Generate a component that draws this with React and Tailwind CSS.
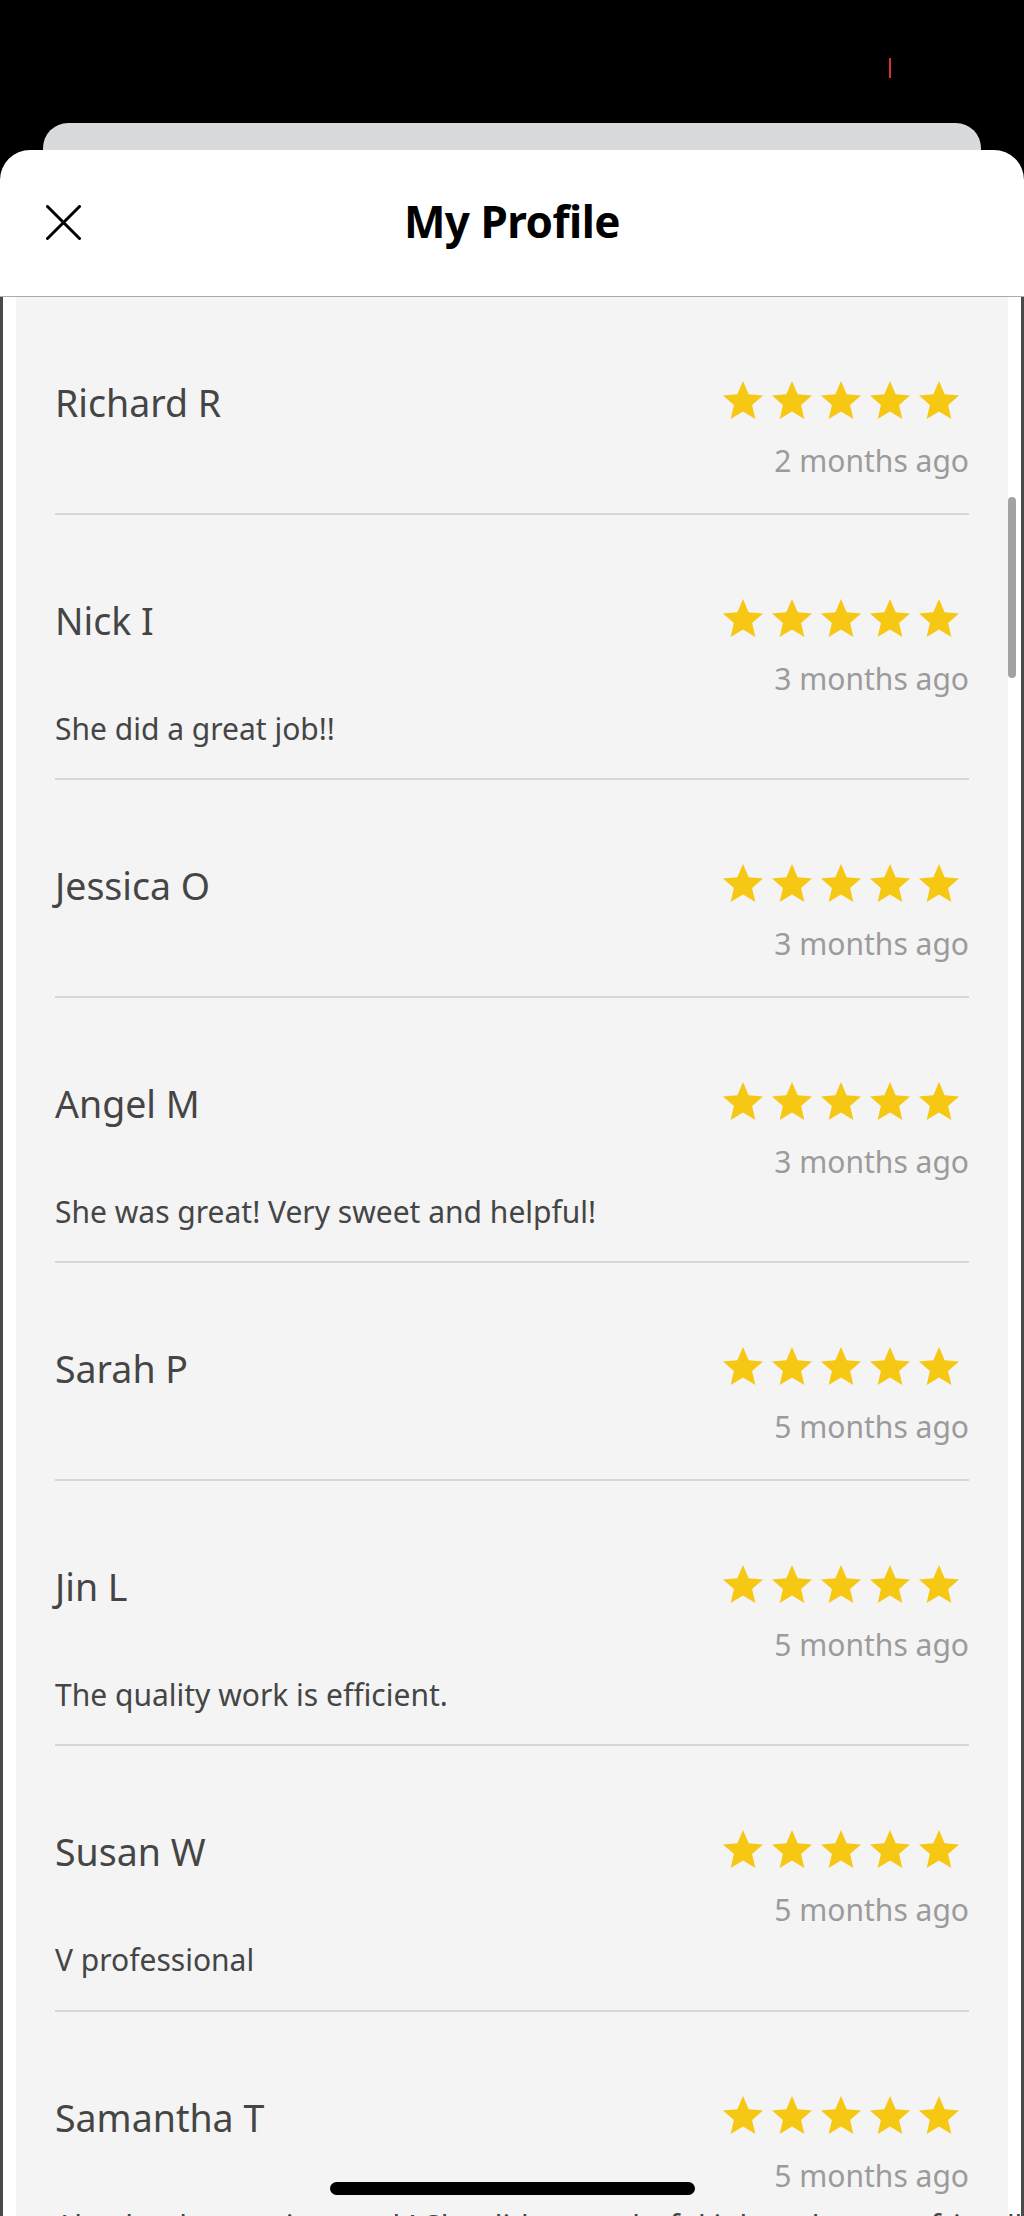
import React from "react";

const reviews = [
  { name: "Richard R", when: "2 months ago" },
  { name: "Nick I", when: "3 months ago", text: "She did a great job!!" },
  { name: "Jessica O", when: "3 months ago" },
  { name: "Angel M", when: "3 months ago", text: "She was great! Very sweet and helpful!" },
  { name: "Sarah P", when: "5 months ago" },
  { name: "Jin L", when: "5 months ago", text: "The quality work is efficient." },
  { name: "Susan W", when: "5 months ago", text: "V professional" },
  { name: "Samantha T", when: "5 months ago", text: "Absolutely amazing work! She did a wonderful job and was so friendly." },
];

function Star() {
  return (
    <svg width="48" height="48" viewBox="0 0 24 24" className="block">
      <path
        fill="#f6c713"
        d="M12 17.27L18.18 21l-1.64-7.03L22 9.24l-7.19-.61L12 2 9.19 8.63 2 9.24l5.46 4.73L5.82 21z"
      />
    </svg>
  );
}

function Review({ r }) {
  return (
    <div className="pt-[82px] pb-[31.5px] border-b-2 border-[#d6d6d6]">
      <div className="flex justify-between items-start">
        <div className="text-[37.5px] leading-[48px] text-[#454545]">{r.name}</div>
        <div className="flex flex-col items-end">
          <div className="flex gap-[1px] mt-[-2px] mr-[6px]">
            <Star />
            <Star />
            <Star />
            <Star />
            <Star />
          </div>
          <div className="mt-[16px] text-[30px] leading-[40px] text-[#9b9b9b]">{r.when}</div>
        </div>
      </div>
      {r.text && (
        <div className="mt-[12px] text-[30px] leading-[36px] text-[#454545] whitespace-nowrap">{r.text}</div>
      )}
    </div>
  );
}

export default function App() {
  return (
    <div
      className="relative w-[1024px] h-[2216px] overflow-hidden bg-black flex flex-col"
      style={{ fontFamily: '"Noto Sans", "Open Sans", sans-serif' }}
    >
      {/* status area */}
      <div className="pt-[58px] pl-[889px]">
        <div className="w-[2px] h-[20px] bg-[#e0302f]" />
      </div>
      <div className="mt-[45px] mx-[43px] h-[27px] rounded-t-[25px] bg-[#d9dadc]" />

      {/* sheet */}
      <div className="flex-1 flex flex-col rounded-t-[30px] bg-white overflow-hidden">
        <div className="h-[147px] shrink-0 grid grid-cols-[1fr_auto_1fr] items-center border-b border-[#ababab]">
          <div className="pl-[46px] pb-[1px]">
            <svg width="35" height="35" viewBox="0 0 35 35" className="block">
              <path d="M1.5 1.5 L33.5 33.5 M33.5 1.5 L1.5 33.5" stroke="#000" strokeWidth="3" strokeLinecap="round" />
            </svg>
          </div>
          <div className="text-[44px] font-bold text-black leading-none tracking-[-0.5px] pb-[4px]">My Profile</div>
          <div />
        </div>

        <div className="flex-1 border-l-[3px] border-r-[3px] border-[#4a4a4a] bg-white px-[13px]">
          <div className="h-full bg-[#f4f4f4] pl-[39px] pr-[39px]">
            {reviews.map((r) => (
              <Review key={r.name} r={r} />
            ))}
          </div>
        </div>
      </div>

      {/* scrollbar */}
      <div className="absolute left-[1008px] top-[497px] w-[8px] h-[181px] rounded-full bg-[#a3a3a3]" />
      {/* home indicator */}
      <div className="absolute left-[330px] top-[2182px] w-[365px] h-[13px] rounded-full bg-black" />
    </div>
  );
}
